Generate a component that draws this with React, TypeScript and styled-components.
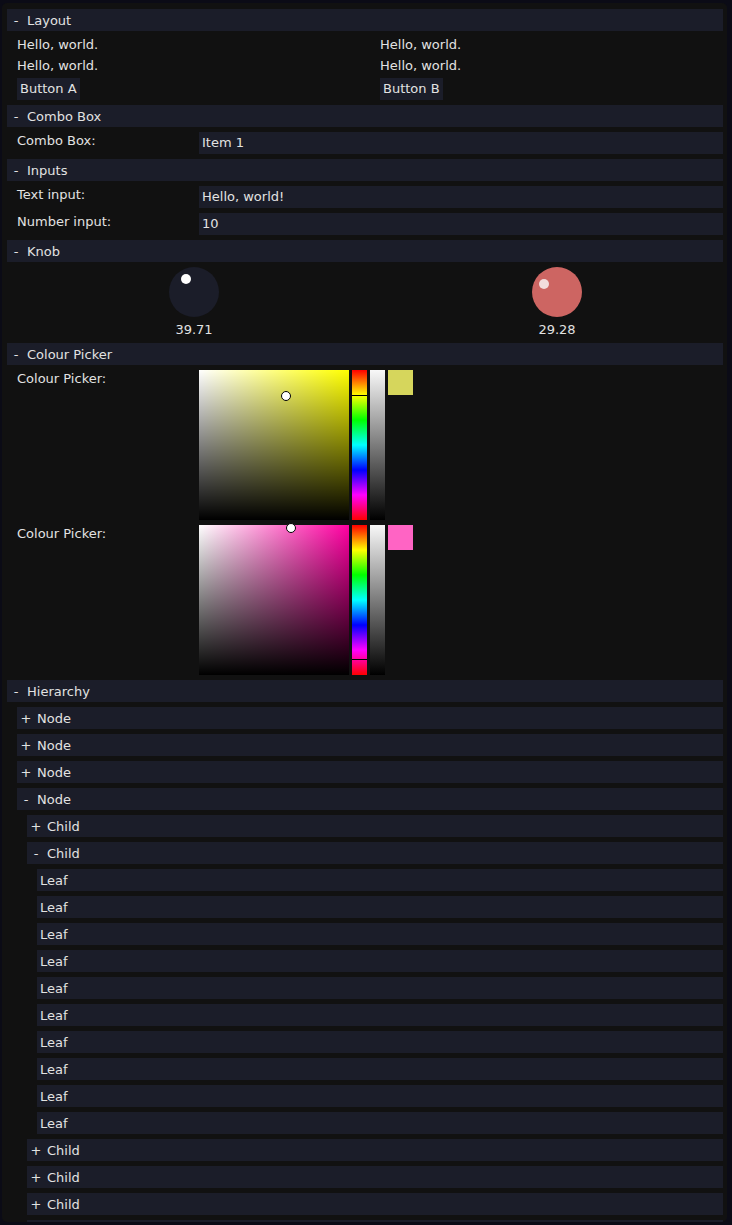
import React from "react";
import styled, { createGlobalStyle } from "styled-components";

const GlobalStyle = createGlobalStyle`
  html, body {
    margin: 0;
    padding: 0;
    background: #0b0b16;
  }
  body {
    font-family: "DejaVu Sans", sans-serif;
    font-size: 13px;
    color: #e2e2e2;
  }
`;

const Panel = styled.div`
  margin: 3px 5px 0 2px;
  height: 1219px;
  background: #111111;
  border-radius: 5px;
  overflow: hidden;
  padding: 6px 4px 0 5px;
  box-sizing: border-box;
  display: flex;
  flex-direction: column;
  gap: 5px;
`;

const Header = styled.div`
  display: flex;
  align-items: center;
  height: 22px;
  background: #1b1d29;
  white-space: nowrap;
  flex-shrink: 0;
`;

const Toggle = styled.span`
  width: 18px;
  flex-shrink: 0;
  text-align: center;
  margin-right: 2px;
`;

const LeafLabel = styled.span`
  padding-left: 3px;
`;

const Content = styled.div`
  display: flex;
  flex-direction: column;
  gap: 5px;
  padding-left: 10px;
`;

const Columns = styled.div`
  display: grid;
  grid-template-columns: 354px 354px;
  column-gap: 9px;
`;

const Column = styled.div`
  display: flex;
  flex-direction: column;
  align-items: flex-start;
  gap: 5px;
`;

const Line = styled.div`
  height: 16px;
  line-height: 18px;
`;

const Button = styled.div`
  height: 22px;
  line-height: 22px;
  padding: 0 3px;
  background: #1b1d29;
`;

const FormRow = styled.div`
  display: grid;
  grid-template-columns: 177px 1fr;
  column-gap: 5px;
  align-items: start;
`;

const Label = styled.div`
  line-height: 16px;
  padding-top: 1px;
`;

const Field = styled.div`
  height: 22px;
  line-height: 22px;
  padding: 0 3px;
  background: #1b1d29;
`;

const KnobCell = styled.div`
  display: flex;
  flex-direction: column;
  align-items: center;
`;

const KnobDial = styled.div<{ $color: string }>`
  position: relative;
  width: 50px;
  height: 50px;
  border-radius: 50%;
  background: ${({ $color }) => $color};
`;

const KnobDot = styled.div<{ $color: string }>`
  position: absolute;
  width: 10px;
  height: 10px;
  margin: -5px 0 0 -5px;
  border-radius: 50%;
  background: ${({ $color }) => $color};
`;

const KnobValue = styled.div`
  margin-top: 5px;
  line-height: 16px;
`;

const Picker = styled.div`
  display: flex;
  gap: 3px;
  align-items: flex-start;
`;

const SvSquare = styled.div<{ $hue: number }>`
  position: relative;
  width: 150px;
  height: 150px;
  background: linear-gradient(to top, #000, rgba(0, 0, 0, 0)),
    linear-gradient(to right, #fff, hsl(${({ $hue }) => $hue}, 100%, 50%));
`;

const SvMarker = styled.div`
  position: absolute;
  width: 8px;
  height: 8px;
  margin: -5px 0 0 -5px;
  border-radius: 50%;
  background: #fff;
  border: 1px solid #000;
`;

const HueBar = styled.div`
  position: relative;
  width: 15px;
  height: 150px;
  background: linear-gradient(
    to bottom,
    #ff0000,
    #ffff00 16.7%,
    #00ff00 33.3%,
    #00ffff 50%,
    #0000ff 66.7%,
    #ff00ff 83.3%,
    #ff0000
  );
`;

const HueMarker = styled.div`
  position: absolute;
  left: 0;
  right: 0;
  height: 1px;
  background: #000;
`;

const ValueBar = styled.div`
  width: 15px;
  height: 150px;
  background: linear-gradient(to bottom, #f8f8f8, #000);
`;

const Swatch = styled.div<{ $color: string }>`
  width: 25px;
  height: 25px;
  background: ${({ $color }) => $color};
`;

const Tree = styled.div<{ $indent: number }>`
  display: flex;
  flex-direction: column;
  gap: 5px;
  padding-left: ${({ $indent }) => $indent}px;
`;

const Section = ({ title, children }: { title: string; children: React.ReactNode }) => (
  <>
    <Header>
      <Toggle>-</Toggle>
      {title}
    </Header>
    <Content>{children}</Content>
  </>
);

const Knob = ({ value, color, dot, dx, dy }: { value: string; color: string; dot: string; dx: number; dy: number }) => (
  <KnobCell>
    <KnobDial $color={color}>
      <KnobDot $color={dot} style={{ left: 25 + dx, top: 25 + dy }} />
    </KnobDial>
    <KnobValue>{value}</KnobValue>
  </KnobCell>
);

const ColourPicker = ({ hue, x, y, swatch }: { hue: number; x: number; y: number; swatch: string }) => {
  const hueY = Math.round((hue / 360) * 150);
  return (
    <Picker>
      <SvSquare $hue={hue}>
        <SvMarker style={{ left: x, top: y }} />
      </SvSquare>
      <HueBar>
        <HueMarker style={{ top: hueY }} />
      </HueBar>
      <ValueBar />
      <Swatch $color={swatch} />
    </Picker>
  );
};

const TreeRow = ({ sign, label }: { sign?: string; label?: string }) => (
  <Header>
    {sign ? <Toggle>{sign}</Toggle> : null}
    {sign ? label : label ? <LeafLabel>{label}</LeafLabel> : null}
  </Header>
);

export default function App() {
  const leaves = Array.from({ length: 10 });
  return (
    <>
      <GlobalStyle />
      <Panel>
        <Section title="Layout">
          <Columns>
            <Column>
              <Line>Hello, world.</Line>
              <Line>Hello, world.</Line>
              <Button>Button A</Button>
            </Column>
            <Column>
              <Line>Hello, world.</Line>
              <Line>Hello, world.</Line>
              <Button>Button B</Button>
            </Column>
          </Columns>
        </Section>

        <Section title="Combo Box">
          <FormRow>
            <Label>Combo Box:</Label>
            <Field>Item 1</Field>
          </FormRow>
        </Section>

        <Section title="Inputs">
          <FormRow>
            <Label>Text input:</Label>
            <Field>Hello, world!</Field>
          </FormRow>
          <FormRow>
            <Label>Number input:</Label>
            <Field>10</Field>
          </FormRow>
        </Section>

        <Section title="Knob">
          <Columns>
            <Knob value="39.71" color="#1b1d29" dot="#ffffff" dx={-8} dy={-13} />
            <Knob value="29.28" color="#cd6562" dot="#f2dcdc" dx={-13} dy={-8} />
          </Columns>
        </Section>

        <Section title="Colour Picker">
          <FormRow>
            <Label>Colour Picker:</Label>
            <ColourPicker hue={60} x={87} y={26} swatch="#d6d65c" />
          </FormRow>
          <FormRow>
            <Label>Colour Picker:</Label>
            <ColourPicker hue={322} x={92} y={3} swatch="#ff64c4" />
          </FormRow>
        </Section>

        <Header>
          <Toggle>-</Toggle>
          Hierarchy
        </Header>
        <Tree $indent={10}>
          <TreeRow sign="+" label="Node" />
          <TreeRow sign="+" label="Node" />
          <TreeRow sign="+" label="Node" />
          <TreeRow sign="-" label="Node" />
          <Tree $indent={10}>
            <TreeRow sign="+" label="Child" />
            <TreeRow sign="-" label="Child" />
            <Tree $indent={10}>
              {leaves.map((_, i) => (
                <TreeRow key={i} label="Leaf" />
              ))}
            </Tree>
            <TreeRow sign="+" label="Child" />
            <TreeRow sign="+" label="Child" />
            <TreeRow sign="+" label="Child" />
            {/* next row only peeks out under the panel's bottom edge */}
            <TreeRow />
          </Tree>
        </Tree>
      </Panel>
    </>
  );
}
